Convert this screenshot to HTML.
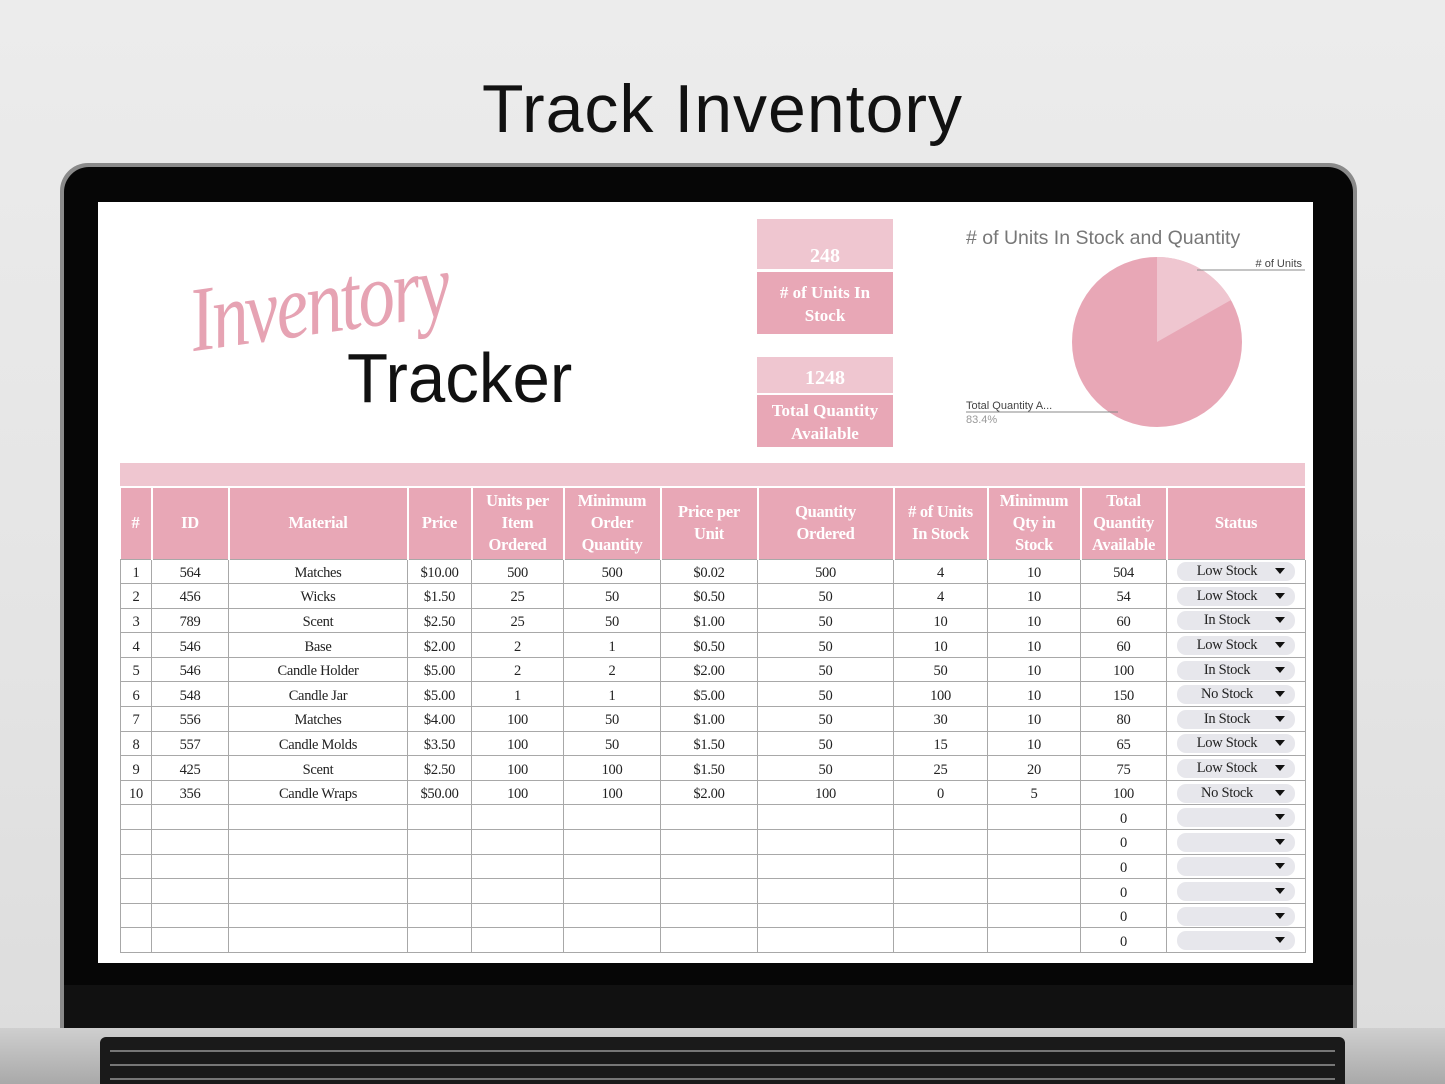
<!DOCTYPE html>
<html><head><meta charset="utf-8"><style>
*{margin:0;padding:0;box-sizing:border-box}
body{width:1445px;height:1084px;overflow:hidden;position:relative;background:linear-gradient(180deg,#ececec 0%,#e4e4e4 60%,#dcdcdc 100%);font-family:"Liberation Serif",serif}
.title{position:absolute;left:0;width:1445px;top:70px;text-align:center;font-family:"Liberation Sans",sans-serif;font-size:68px;color:#111;letter-spacing:1px}
.lid{position:absolute;left:60px;top:163px;width:1297px;height:880px;background:#8a8a8a;border-radius:28px 28px 0 0}
.bezel{position:absolute;left:64px;top:167px;width:1289px;height:860px;background:#060606;border-radius:25px 25px 0 0}
.chin{position:absolute;left:64px;top:985px;width:1289px;height:45px;background:#111}
.deck{position:absolute;left:0;top:1028px;width:1445px;height:56px;background:linear-gradient(180deg,#cfcfcf,#a9a9a9)}
.kb{position:absolute;left:100px;top:1037px;width:1245px;height:47px;background:#1a1a1a;border-radius:6px 6px 0 0}
.krow{position:absolute;left:110px;height:2px;background:#777;width:1225px}
.screen{position:absolute;left:98px;top:202px;width:1215px;height:761px;background:#fff}
.script{position:absolute;left:182px;top:268px;font-family:"Liberation Serif",serif;font-style:italic;font-size:92px;color:#e6a3b3;transform:rotate(-8deg) scaleX(0.8);transform-origin:left top;letter-spacing:-3px}
.tracker{position:absolute;left:347px;top:338px;font-family:"Liberation Sans",sans-serif;font-size:70px;color:#111;transform:scaleX(0.96);transform-origin:left top}
.card{position:absolute;left:757px;width:136px;color:#fff;font-weight:bold;text-align:center;font-size:17px;line-height:23px}
.tbl{position:absolute;left:120px;top:488px;border-collapse:collapse;table-layout:fixed}
.tbl td,.tbl th{border:1px solid #a8a8a8;text-align:center;font-size:14.5px;color:#222;padding:0;white-space:nowrap;overflow:hidden}
.tbl th{background:#e8a7b6;color:#fff;font-size:16.5px;line-height:22px;height:71px;border-color:#fff;border-width:0 2px 0 0;white-space:normal;padding:0 6px;letter-spacing:-0.3px}
.tbl td{height:24.6px;line-height:20px;padding-top:3px;letter-spacing:-0.3px}
.st{display:block;margin:-2px 10px 0;height:19px;line-height:19px;background:#e7e7ec;border-radius:9px;position:relative;font-size:14.5px;padding-right:18px}
.st:after{content:"";position:absolute;right:10px;top:6px;border-left:5px solid transparent;border-right:5px solid transparent;border-top:6px solid #111}
</style></head><body>
<div class="title">Track Inventory</div>
<div class="lid"></div><div class="bezel"></div><div class="chin"></div>
<div class="deck"></div><div class="kb"></div>
<div class="krow" style="top:1050px"></div><div class="krow" style="top:1064px"></div><div class="krow" style="top:1078px"></div>
<div class="screen"></div>
<div class="script">Inventory</div>
<div class="tracker">Tracker</div>
<div class="card" style="top:219px;height:50px;background:#efc6d0;font-size:20px;line-height:26px;padding-top:24px">248</div>
<div class="card" style="top:272px;height:62px;background:#e8a7b6;padding-top:9px"># of Units In<br>Stock</div>
<div class="card" style="top:357px;height:36px;background:#efc6d0;font-size:20px;line-height:26px;padding-top:8px">1248</div>
<div class="card" style="top:395px;height:52px;background:#e8a7b6;padding-top:4px">Total Quantity<br>Available</div>
<div style="position:absolute;left:966px;top:227px;font-family:'Liberation Sans',sans-serif;font-size:19.5px;color:#777">
# of Units In Stock and Quantity</div>
<svg style="position:absolute;left:950px;top:240px" width="360" height="200">
<circle cx="207" cy="102" r="85" fill="#e8a7b6"/>
<path d="M207 102 L207 17 A85 85 0 0 1 281 60 Z" fill="#efc6d0"/>
<line x1="247" y1="30" x2="355" y2="30" stroke="#888" stroke-width="1"/>
<line x1="16" y1="172" x2="168" y2="172" stroke="#888" stroke-width="1"/>
<text x="352" y="27" text-anchor="end" font-family="Liberation Sans" font-size="11" fill="#444"># of Units</text>
<text x="16" y="169" font-family="Liberation Sans" font-size="11" fill="#444">Total Quantity A...</text>
<text x="16" y="183" font-family="Liberation Sans" font-size="11" fill="#999">83.4%</text>
</svg>
<div style="position:absolute;left:120px;top:463px;width:1185px;height:23px;background:#efc6d0"></div>
<table class="tbl">
<colgroup><col style="width:31px"><col style="width:77px"><col style="width:179px"><col style="width:64px"><col style="width:92px"><col style="width:97px"><col style="width:97px"><col style="width:136px"><col style="width:94px"><col style="width:93px"><col style="width:86px"><col style="width:139px"></colgroup>
<tr><th>#</th><th>ID</th><th>Material</th><th>Price</th><th>Units per Item Ordered</th><th>Minimum Order Quantity</th><th>Price per Unit</th><th style="padding:0 30px">Quantity Ordered</th><th># of Units In Stock</th><th>Minimum Qty in Stock</th><th>Total Quantity Available</th><th>Status</th></tr>
<tr><td>1</td><td>564</td><td>Matches</td><td>$10.00</td><td>500</td><td>500</td><td>$0.02</td><td>500</td><td>4</td><td>10</td><td>504</td><td><span class="st">Low Stock</span></td></tr>
<tr><td>2</td><td>456</td><td>Wicks</td><td>$1.50</td><td>25</td><td>50</td><td>$0.50</td><td>50</td><td>4</td><td>10</td><td>54</td><td><span class="st">Low Stock</span></td></tr>
<tr><td>3</td><td>789</td><td>Scent</td><td>$2.50</td><td>25</td><td>50</td><td>$1.00</td><td>50</td><td>10</td><td>10</td><td>60</td><td><span class="st">In Stock</span></td></tr>
<tr><td>4</td><td>546</td><td>Base</td><td>$2.00</td><td>2</td><td>1</td><td>$0.50</td><td>50</td><td>10</td><td>10</td><td>60</td><td><span class="st">Low Stock</span></td></tr>
<tr><td>5</td><td>546</td><td>Candle Holder</td><td>$5.00</td><td>2</td><td>2</td><td>$2.00</td><td>50</td><td>50</td><td>10</td><td>100</td><td><span class="st">In Stock</span></td></tr>
<tr><td>6</td><td>548</td><td>Candle Jar</td><td>$5.00</td><td>1</td><td>1</td><td>$5.00</td><td>50</td><td>100</td><td>10</td><td>150</td><td><span class="st">No Stock</span></td></tr>
<tr><td>7</td><td>556</td><td>Matches</td><td>$4.00</td><td>100</td><td>50</td><td>$1.00</td><td>50</td><td>30</td><td>10</td><td>80</td><td><span class="st">In Stock</span></td></tr>
<tr><td>8</td><td>557</td><td>Candle Molds</td><td>$3.50</td><td>100</td><td>50</td><td>$1.50</td><td>50</td><td>15</td><td>10</td><td>65</td><td><span class="st">Low Stock</span></td></tr>
<tr><td>9</td><td>425</td><td>Scent</td><td>$2.50</td><td>100</td><td>100</td><td>$1.50</td><td>50</td><td>25</td><td>20</td><td>75</td><td><span class="st">Low Stock</span></td></tr>
<tr><td>10</td><td>356</td><td>Candle Wraps</td><td>$50.00</td><td>100</td><td>100</td><td>$2.00</td><td>100</td><td>0</td><td>5</td><td>100</td><td><span class="st">No Stock</span></td></tr>
<tr><td></td><td></td><td></td><td></td><td></td><td></td><td></td><td></td><td></td><td></td><td>0</td><td><span class="st"></span></td></tr>
<tr><td></td><td></td><td></td><td></td><td></td><td></td><td></td><td></td><td></td><td></td><td>0</td><td><span class="st"></span></td></tr>
<tr><td></td><td></td><td></td><td></td><td></td><td></td><td></td><td></td><td></td><td></td><td>0</td><td><span class="st"></span></td></tr>
<tr><td></td><td></td><td></td><td></td><td></td><td></td><td></td><td></td><td></td><td></td><td>0</td><td><span class="st"></span></td></tr>
<tr><td></td><td></td><td></td><td></td><td></td><td></td><td></td><td></td><td></td><td></td><td>0</td><td><span class="st"></span></td></tr>
<tr><td></td><td></td><td></td><td></td><td></td><td></td><td></td><td></td><td></td><td></td><td>0</td><td><span class="st"></span></td></tr>
</table>
</body></html>
